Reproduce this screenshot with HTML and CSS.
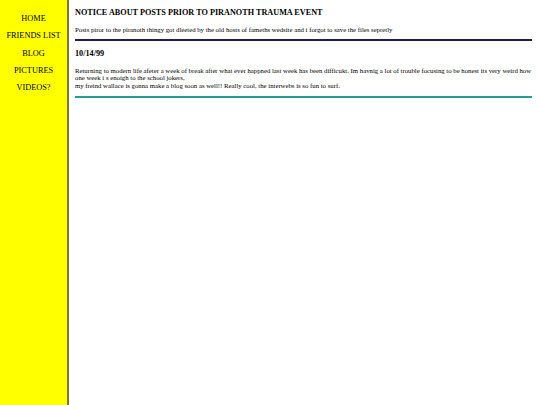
FILE: index.html
```html
<!DOCTYPE html>
<html>
<head>
<meta charset="utf-8">
<link rel="stylesheet" href="styles.css">
</head>
<body>
<div class="page">
  <nav class="sidebar">
    <a class="nav-link" href="#">HOME</a>
    <a class="nav-link" href="#">FRIENDS LIST</a>
    <a class="nav-link" href="#">BLOG</a>
    <a class="nav-link" href="#">PICTURES</a>
    <a class="nav-link" href="#">VIDEOS?</a>
  </nav>
  <main class="content">
    <section class="post post-notice">
      <h2 class="post-title">NOTICE ABOUT POSTS PRIOR TO PIRANOTH TRAUMA EVENT</h2>
      <p class="post-text">Posts piror to the piranoth thingy got dleeted by the old hosts of fameths wedsite and i forgot to save the files sepretly</p>
    </section>
    <section class="post post-entry">
      <h2 class="post-title">10/14/99</h2>
      <p class="post-text">Returning to modern life afeter a week of break after what ever happned last week has been difficukt. Im havnig a lot of trouble focusing to be honest its very weird how one week i s enoigh to the school jokers,<br>my freind wallace is gonna make a blog soon as well!! Really cool, the interwebs is so fun to surf.</p>
    </section>
  </main>
</div>
</body>
</html>
```

FILE: styles.css
```css
html, body {
  margin: 0;
  padding: 0;
  height: 100%;
  background: #ffffff;
  font-family: "Liberation Serif", "Times New Roman", serif;
  color: #000000;
}

.page {
  display: flex;
  min-height: 100%;
}

.sidebar {
  width: 67px;
  flex: none;
  background: #ffff00;
  border-right: 2px solid #7a7a30;
  display: flex;
  flex-direction: column;
  align-items: center;
  padding-top: 14px;
  gap: 7.3px;
}

.nav-link {
  font-size: 8.3px;
  line-height: 10px;
  color: #000000;
  text-decoration: none;
  white-space: nowrap;
}

.content {
  flex: 1;
  padding: 7px 8px 0 6px;
}

.post-notice {
  border-bottom: 2px solid #1c1c5e;
  padding-bottom: 6px;
}

.post-entry {
  border-bottom: 2px solid #22a08e;
  padding-bottom: 7px;
  margin-top: 7px;
}

.post-title {
  font-size: 8.2px;
  line-height: 11px;
  font-weight: bold;
  margin: 0 0 7.5px 0;
}

.post-text {
  font-size: 6.75px;
  line-height: 7.6px;
  margin: 0;
}
```
